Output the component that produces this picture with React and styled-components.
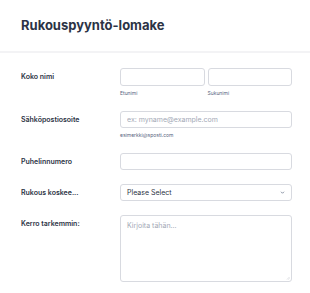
import React from 'react';
import styled, { createGlobalStyle } from 'styled-components';

const GlobalStyle = createGlobalStyle`
    * {
        box-sizing: border-box;
    }
    body {
        margin: 0;
        background: #fff;
        font-family: Inter, "Noto Sans", sans-serif;
        color: #2c3345;
    }
`;

const Page = styled.div`
    width: 310px;
    min-height: 293px;
    background: #fff;
`;

const Header = styled.div`
    padding: 17px 21px 0;
    height: 53px;
    border-bottom: 2px solid #f3f3f5;
`;

const Title = styled.h1`
    margin: 0;
    font-size: 13px;
    line-height: 17px;
    font-weight: 700;
    color: #2c3345;
`;

const Form = styled.div`
    padding: 8px 18px 0 21px;
    display: flex;
    flex-direction: column;
`;

const Row = styled.div`
    display: grid;
    grid-template-columns: 99px 1fr;
    padding: 7px 0;
`;

const Label = styled.label`
    font-size: 7px;
    line-height: 17px;
    font-weight: 600;
    color: #2c3345;
`;

const Field = styled.div`
    display: flex;
    flex-direction: column;
`;

const Pair = styled.div`
    display: grid;
    grid-template-columns: 1fr 1fr;
    gap: 3px;
`;

const Input = styled.input`
    width: 100%;
    height: ${props => props.$h || 18}px;
    border: 1px solid #d8dae0;
    border-radius: 3px;
    padding: 0 6px;
    font-family: inherit;
    font-size: 7px;
    color: #2c3345;
    outline: none;
    background: #fff;

    &::placeholder {
        color: #a3a9b6;
    }
`;

const Sub = styled.span`
    margin-top: 3px;
    font-size: 5px;
    line-height: 8px;
    color: #57647e;
`;

const SelectBox = styled.div`
    position: relative;
    height: 17px;
    border: 1px solid #d8dae0;
    border-radius: 3px;
    padding: 0 6px;
    display: flex;
    align-items: center;
    justify-content: space-between;
    font-size: 7px;
    color: #2c3345;
`;

const Chevron = styled.svg`
    width: 5px;
    height: 5px;
`;

const AreaWrap = styled.div`
    position: relative;
`;

const Area = styled.textarea`
    display: block;
    width: 100%;
    height: 67px;
    border: 1px solid #d8dae0;
    border-radius: 3px;
    padding: 5px 6px;
    font-family: inherit;
    font-size: 7px;
    color: #2c3345;
    resize: none;
    outline: none;

    &::placeholder {
        color: #a3a9b6;
    }
`;

const Grip = styled.svg`
    position: absolute;
    right: 2px;
    bottom: 2px;
    width: 4px;
    height: 4px;
`;

export default function App() {
    return (
        <Page>
            <GlobalStyle />
            <Header>
                <Title>Rukouspyyntö-lomake</Title>
            </Header>
            <Form>
                <Row>
                    <Label>Koko nimi</Label>
                    <Pair>
                        <Field>
                            <Input />
                            <Sub>Etunimi</Sub>
                        </Field>
                        <Field>
                            <Input />
                            <Sub>Sukunimi</Sub>
                        </Field>
                    </Pair>
                </Row>
                <Row>
                    <Label>Sähköpostiosoite</Label>
                    <Field>
                        <Input $h={17} placeholder="ex: myname@example.com" />
                        <Sub>esimerkki@sposti.com</Sub>
                    </Field>
                </Row>
                <Row>
                    <Label>Puhelinnumero</Label>
                    <Input $h={17} />
                </Row>
                <Row>
                    <Label>Rukous koskee...</Label>
                    <SelectBox>
                        <span>Please Select</span>
                        <Chevron viewBox="0 0 10 10">
                            <path d="M2 3.5 L5 6.5 L8 3.5" fill="none" stroke="#57647e" strokeWidth="1.4" />
                        </Chevron>
                    </SelectBox>
                </Row>
                <Row>
                    <Label>Kerro tarkemmin:</Label>
                    <AreaWrap>
                        <Area placeholder="Kirjoita tähän..." />
                        <Grip viewBox="0 0 8 8">
                            <path d="M7 2 L2 7 M7 5 L5 7" stroke="#b8bcc6" strokeWidth="1" />
                        </Grip>
                    </AreaWrap>
                </Row>
            </Form>
        </Page>
    );
}
